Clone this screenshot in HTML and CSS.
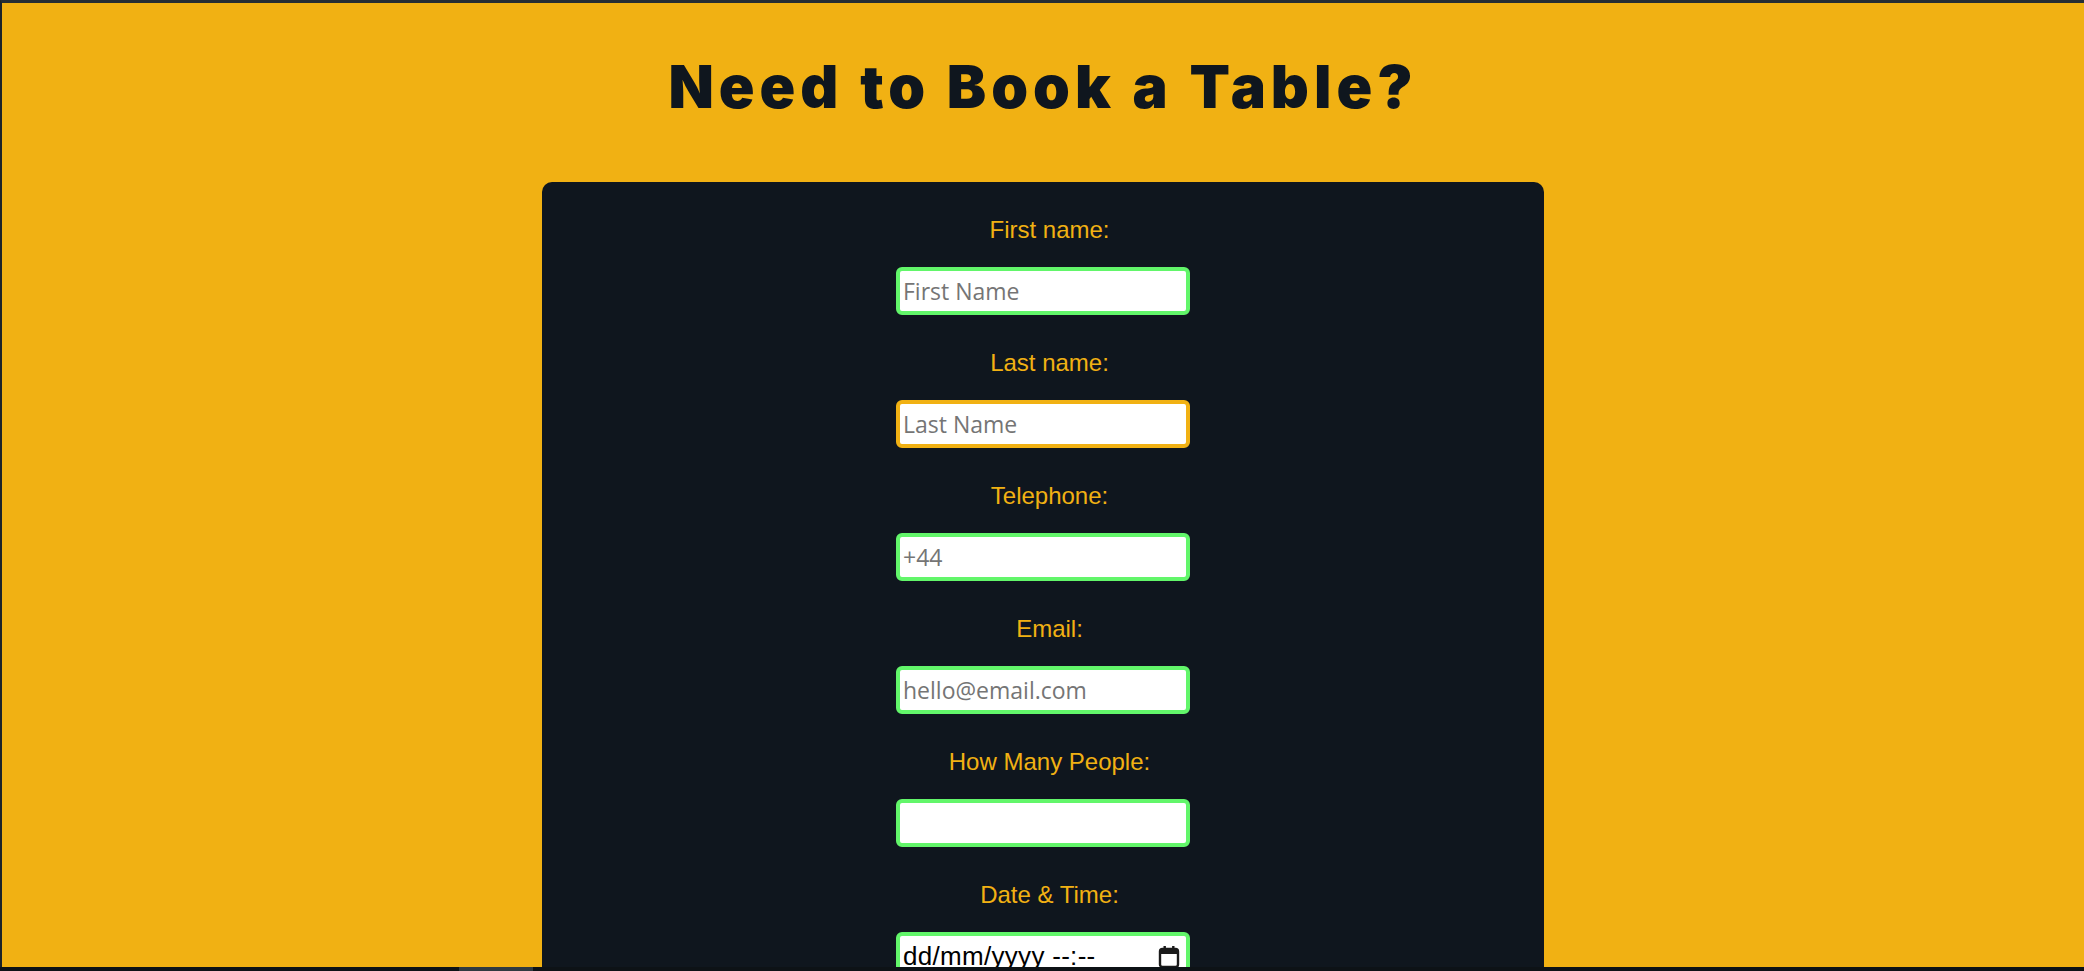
FILE: index.html
```html
<!DOCTYPE html>
<html lang="en">
<head>
<meta charset="utf-8">
<title>Book a Table</title>
<link rel="stylesheet" href="styles.css">
</head>
<body>
<div class="page">
  <h1 class="title">Need to Book a Table?</h1>
  <form class="card">
    <div class="field">
      <label class="label" for="fname">First name:</label>
      <input class="input" id="fname" type="text" placeholder="First Name">
    </div>
    <div class="field">
      <label class="label" for="lname">Last name:</label>
      <input class="input input-focus" id="lname" type="text" placeholder="Last Name">
    </div>
    <div class="field">
      <label class="label" for="tel">Telephone:</label>
      <input class="input" id="tel" type="tel" placeholder="+44">
    </div>
    <div class="field">
      <label class="label" for="email">Email:</label>
      <input class="input" id="email" type="email" placeholder="hello@email.com">
    </div>
    <div class="field">
      <label class="label" for="people">How Many People:</label>
      <input class="input" id="people" type="text">
    </div>
    <div class="field">
      <label class="label" for="when">Date &amp; Time:</label>
      <div class="input date-field" id="when">
        <span class="date-text">dd/mm/yyyy --:--</span>
        <svg class="cal" width="22" height="24" viewBox="0 0 22 24" aria-hidden="true">
          <rect x="2" y="4" width="18" height="18" rx="2.5" fill="none" stroke="#1a1a1a" stroke-width="2.4"/>
          <rect x="2" y="4" width="18" height="5" fill="#1a1a1a"/>
          <rect x="5.5" y="1" width="2.4" height="5" fill="#1a1a1a"/>
          <rect x="14.1" y="1" width="2.4" height="5" fill="#1a1a1a"/>
        </svg>
      </div>
    </div>
  </form>
</div>
<div class="scrollbar"><div class="thumb"></div></div>
</body>
</html>
```

FILE: styles.css
```css
html, body {
  margin: 0;
  padding: 0;
  background: #f1b113;
}

.page {
  border-top: 3px solid #262e34;
  border-left: 2px solid #1c2329;
  min-height: 1100px;
  display: flex;
  flex-direction: column;
  align-items: center;
}

.title {
  margin: 54px 0 0 0;
  font-family: Inter, "DejaVu Sans", sans-serif;
  font-weight: 900;
  font-size: 59px;
  line-height: 59px;
  letter-spacing: 5px;
  color: #0f161e;
  text-align: center;
}

.card {
  margin-top: 66px;
  width: 1002px;
  box-sizing: border-box;
  background: #0f161e;
  border-radius: 10px 10px 0 0;
  padding: 34px 0 60px 0;
  display: flex;
  flex-direction: column;
  align-items: center;
  gap: 34px;
}

.field {
  display: flex;
  flex-direction: column;
  align-items: center;
  gap: 23px;
}

.label {
  font-family: "Liberation Sans", Arial, sans-serif;
  font-size: 24px;
  line-height: 28px;
  color: #f1b113;
  padding-left: 13px;
}

.input {
  box-sizing: border-box;
  width: 294px;
  height: 48px;
  border: 4px solid #62f66a;
  border-radius: 6px;
  background: #ffffff;
  padding: 0 3px;
  margin: 0;
  font-family: "Open Sans", "Noto Sans", sans-serif;
  font-size: 23px;
  color: #222;
  outline: none;
}

.input::placeholder {
  color: #757575;
}

.input-focus {
  border-color: #f1b113;
}

.date-field {
  display: flex;
  align-items: center;
  justify-content: space-between;
  padding: 0 6px 0 3px;
}

.date-text {
  font-family: "Liberation Sans", Arial, sans-serif;
  font-size: 26px;
  letter-spacing: 0.3px;
  color: #000;
  line-height: 40px;
}

.cal {
  display: block;
  margin-top: 2px;
}

.scrollbar {
  position: fixed;
  left: 0;
  right: 0;
  bottom: 0;
  height: 4px;
  background: #0d1216;
}

.thumb {
  position: absolute;
  left: 459px;
  width: 74px;
  top: 0;
  bottom: 0;
  background: #2f3a41;
}
```
